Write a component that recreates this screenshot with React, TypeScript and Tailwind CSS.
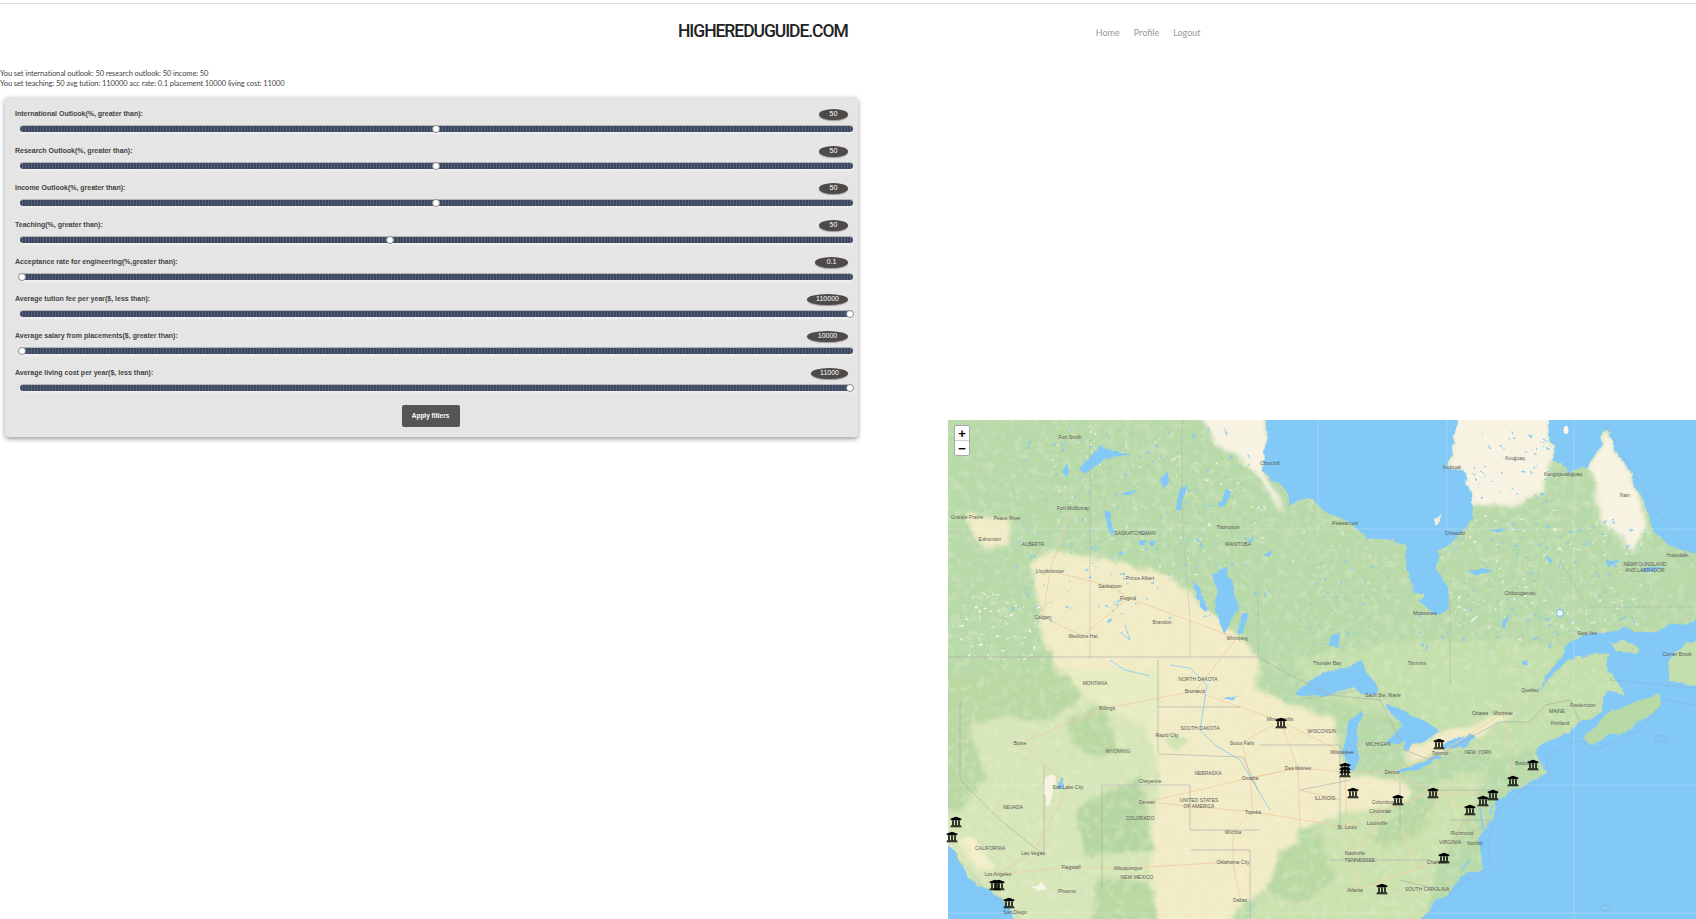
import { FaUniversity } from 'react-icons/fa';

const filters = [
	{ label: 'International Outlook(%, greater than):', value: '50', pct: 50, pill: 'w-[29px]' },
	{ label: 'Research Outlook(%, greater than):', value: '50', pct: 50, pill: 'w-[29px]' },
	{ label: 'Income Outlook(%, greater than):', value: '50', pct: 50, pill: 'w-[29px]' },
	{ label: 'Teaching(%, greater than):', value: '50', pct: 44.5, pill: 'w-[29px]' },
	{ label: 'Acceptance rate for engineering(%,greater than):', value: '0.1', pct: 0, pill: 'w-[33px]' },
	{ label: 'Average tution fee per year($, less than):', value: '110000', pct: 100, pill: 'w-[41px]' },
	{ label: 'Average salary from placements($, greater than):', value: '10000', pct: 0, pill: 'w-[41px]' },
	{ label: 'Average living cost per year($, less than):', value: '11000', pct: 100, pill: 'w-[37px]' },
];

const pins = [
	[1281, 723], [1439, 744], [1345, 768], [1345, 772], [1353, 793], [1398, 800], [1433, 793],
	[1513, 781], [1533, 765], [1493, 795], [1483, 801], [1470, 810], [1444, 858], [1382, 889],
	[956, 822], [952, 837], [995, 885], [999, 885], [1009, 903],
];

const labels: [number, number, string][] = [
	[1073, 508, 'Fort McMurray'], [967, 517, 'Grande Prairie'], [1007, 518, 'Peace River'], [990, 539, 'Edmonton'],
	[1033, 544, 'ALBERTA'], [1135, 533, 'SASKATCHEWAN'], [1238, 544, 'MANITOBA'], [1228, 527, 'Thompson'],
	[1050, 571, 'Lloydminster'], [1110, 586, 'Saskatoon'], [1140, 578, 'Prince Albert'], [1128, 598, 'Regina'],
	[1237, 638, 'Winnipeg'], [1083, 636, 'Medicine Hat'], [1043, 617, 'Calgary'], [1095, 683, 'MONTANA'],
	[1107, 708, 'Billings'], [1198, 679, 'NORTH DAKOTA'], [1195, 691, 'Bismarck'], [1200, 728, 'SOUTH DAKOTA'],
	[1167, 735, 'Rapid City'], [1242, 743, 'Sioux Falls'], [1280, 719, 'Minneapolis'], [1118, 751, 'WYOMING'],
	[1208, 773, 'NEBRASKA'], [1250, 778, 'Omaha'], [1147, 802, 'Denver'], [1140, 818, 'COLORADO'],
	[1068, 787, 'Salt Lake City'], [1150, 781, 'Cheyenne'], [1199, 800, 'UNITED STATES'], [1199, 806, 'OF AMERICA'],
	[1253, 812, 'Topeka'], [1233, 832, 'Wichita'], [1233, 862, 'Oklahoma City'], [1137, 877, 'NEW MEXICO'],
	[1128, 868, 'Albuquerque'], [1033, 853, 'Las Vegas'], [1067, 891, 'Phoenix'], [1071, 867, 'Flagstaff'],
	[998, 874, 'Los Angeles'], [1015, 912, 'San Diego'], [990, 848, 'CALIFORNIA'], [1013, 807, 'NEVADA'],
	[1240, 900, 'Dallas'], [1020, 743, 'Boise'], [1342, 752, 'Milwaukee'], [1440, 753, 'Toronto'],
	[1392, 772, 'Detroit'], [1325, 798, 'ILLINOIS'], [1378, 744, 'MICHIGAN'], [1322, 731, 'WISCONSIN'],
	[1480, 713, 'Ottawa'], [1503, 713, 'Montreal'], [1523, 763, 'Boston'], [1478, 752, 'NEW YORK'],
	[1475, 843, 'Norfolk'], [1462, 833, 'Richmond'], [1450, 842, 'VIRGINIA'], [1437, 862, 'Charlotte'],
	[1355, 890, 'Atlanta'], [1355, 853, 'Nashville'], [1360, 860, 'TENNESSEE'], [1427, 889, 'SOUTH CAROLINA'],
	[1383, 802, 'Columbus'], [1380, 811, 'Cincinnati'], [1377, 823, 'Louisville'], [1347, 827, 'St. Louis'],
	[1298, 768, 'Des Moines'], [1383, 695, 'Sault Ste. Marie'], [1560, 723, 'Portland'], [1583, 705, 'Fredericton'],
	[1557, 711, 'MAINE'], [1530, 690, 'Quebec'], [1327, 663, 'Thunder Bay'], [1417, 663, 'Timmins'],
	[1425, 613, 'Moosonee'], [1645, 564, 'NEWFOUNDLAND'], [1645, 570, 'AND LABRADOR'], [1587, 633, 'Sept-Iles'],
	[1677, 654, 'Corner Brook'], [1270, 463, 'Churchill'], [1515, 458, 'Kuujjuaq'], [1563, 474, 'Kangiqsualujjuaq'],
	[1452, 467, 'Inukjuak'], [1455, 533, 'Chisasibi'], [1345, 523, 'Peawanuck'], [1520, 593, 'Chibougamau'],
	[1625, 495, 'Nain'], [1677, 555, 'Hopedale'], [1162, 622, 'Brandon'], [1070, 437, 'Fort Smith'],
];

const land =
	'930,400 1268,400 1268,420 1263,453 1265,473 1288,493 1290,505 1300,500 1313,500 1343,520 1370,537 1405,543 1407,560 1407,580 1415,597 1435,617 1445,610 1448,590 1440,570 1437,552 1463,533 1473,517 1470,493 1463,473 1448,467 1457,420 1457,400 1550,400 1550,420 1553,460 1570,473 1587,467 1607,428 1622,460 1637,487 1647,510 1653,533 1680,550 1720,560 1720,610 1660,630 1583,633 1567,650 1533,693 1567,660 1610,653 1607,670 1625,695 1603,695 1603,712 1580,723 1540,747 1537,757 1548,773 1523,785 1507,790 1497,803 1493,818 1483,830 1478,840 1485,867 1460,878 1440,897 1420,919 1400,945 1030,945 1015,919 1003,900 990,890 973,880 948,847 925,825';

const lakes = [
	'1080,467 1100,448 1133,455 1107,457 1087,470',
	'1173,513 1180,487 1188,485 1180,510',
	'1213,573 1227,567 1240,607 1227,635 1219,623',
	'1240,613 1246,613 1245,632 1240,631',
	'1193,583 1210,607 1207,611 1192,592',
	'1065,465 1070,470 1068,477 1062,472',
	'1160,480 1172,470 1168,485 1162,488',
	'1125,495 1135,490 1128,498 1122,498',
	'1103,510 1110,515 1117,530 1115,537 1108,524',
	'1150,540 1158,540 1152,548',
	'1218,505 1226,490 1230,494 1224,506',
	'1262,555 1272,550 1268,558',
	'1248,540 1256,535 1252,543',
	'1118,552 1124,548 1123,555',
	'1140,540 1147,538 1146,545 1141,546',
	'1293,693 1312,680 1340,667 1362,660 1370,672 1378,690 1372,697 1350,690 1330,695 1305,697',
	'1343,747 1350,720 1363,708 1358,735 1360,757 1353,773 1347,770',
	'1387,705 1407,710 1427,723 1437,732 1413,747 1405,753 1403,743 1387,743 1397,733 1403,727 1387,710',
	'1397,772 1420,770 1443,757 1440,755 1417,765 1400,768',
	'1443,745 1470,733 1476,738 1468,745 1447,748',
	'1333,640 1340,632 1338,650 1332,648',
	'1500,627 1513,613 1505,630',
	'1521,660 1526,660 1527,666 1521,666',
	'1465,570 1480,567 1495,570 1480,574',
	'1544,556 1552,560 1547,566',
	'1606,560 1622,562 1610,566',
	'1640,572 1662,566 1650,574',
	'1490,530 1508,528 1500,534',
	'1058,782 1064,778 1066,790 1060,788',
	'1225,700 1240,695 1232,700',
];

const roads = [
	'M1043 617L1083 636L1128 598L1237 638',
	'M1050 571L1110 586L1128 598',
	'M1043 617L1050 571L1073 508',
	'M1107 708L1195 691L1237 638',
	'M1195 691L1280 721L1342 752',
	'M1147 802L1250 778L1298 768L1345 772',
	'M1147 802L1253 812L1347 827L1380 811L1433 793L1493 795',
	'M1233 832L1233 862L1240 900',
	'M1253 812L1233 832',
	'M1280 721L1298 768L1300 830',
	'M1345 772L1347 827L1355 853L1355 890',
	'M1345 772L1392 772L1440 753L1503 713',
	'M1392 772L1433 793L1470 810L1462 833L1437 862L1355 890',
	'M1503 713L1530 690',
	'M1503 713L1513 781L1533 765',
	'M1068 787L1020 743L1107 708',
	'M1068 787L1033 853L998 874',
	'M998 874L1071 867L1128 868L1233 862',
	'M1242 743L1250 778L1253 812',
	'M1242 743L1280 721',
	'M1380 811L1377 823L1355 853',
	'M1483 801L1470 810L1475 843',
	'M1298 768L1250 778',
	'M1340 800L1300 790',
	'M1400 830L1420 870',
];

// scattered ponds and clearings of the boreal belt
function rng(seed: number) {
	return () => {
		seed = (seed + 0x6d2b79f5) | 0;
		let t = Math.imul(seed ^ (seed >>> 15), 1 | seed);
		t = (t + Math.imul(t ^ (t >>> 7), 61 | t)) ^ t;
		return ((t ^ (t >>> 14)) >>> 0) / 4294967296;
	};
}

function speckle(seed: number, n: number, x: number, y: number, w: number, h: number, fill: string) {
	const r = rng(seed);
	return Array.from({ length: n }, (_, i) => (
		<rect
			key={i}
			x={x + r() * w}
			y={y + r() * h}
			width={0.8 + r() * 2}
			height={0.8 + r() * 1.4}
			fill={fill}
		/>
	));
}

function MapArt() {
	return (
		<svg viewBox="948 420 748 499" className="block h-[499px] w-[748px]">
			<defs>
				<filter id="rough" filterUnits="userSpaceOnUse" x="900" y="380" width="850" height="600">
					<feTurbulence type="fractalNoise" baseFrequency="0.05" numOctaves="4" seed="7" />
					<feDisplacementMap in="SourceGraphic" scale="11" xChannelSelector="R" yChannelSelector="G" />
				</filter>
				<filter id="soft" filterUnits="userSpaceOnUse" x="900" y="380" width="850" height="600">
					<feGaussianBlur stdDeviation="2" />
				</filter>
				<filter id="mottle" filterUnits="userSpaceOnUse" x="900" y="380" width="850" height="600">
					<feTurbulence type="fractalNoise" baseFrequency="0.13" numOctaves="4" seed="3" />
					<feColorMatrix type="matrix" values="0 0 0 0 0.9  0 0 0 0 0.93  0 0 0 0 0.74  3 0 0 0 -1.35" />
				</filter>
				<clipPath id="landClip">
					<polygon points={land} />
				</clipPath>
			</defs>
			<rect x="948" y="420" width="748" height="499" fill="#83c9f7" />
			<g filter="url(#rough)">
				<polygon fill="#b8d9a8" points={land} />
				<polygon fill="#b8d9a8" points="1657,693 1663,703 1633,727 1593,745 1583,737 1613,710" />
				<polygon fill="#c4dfae" points="1610,640 1625,641 1640,653 1635,656 1617,648" />
				<polygon fill="#c4dfae" points="1720,628 1720,685 1668,682 1672,660 1690,640" />
				<polygon fill="#c4dfae" points="1415,592 1425,594 1423,600 1412,597" />
				<g clipPath="url(#landClip)">
					<g filter="url(#soft)">
						{/* warmer south of the belt */}
						<polygon fill="#c3dfac" points="1290,660 1400,640 1510,640 1567,650 1533,693 1567,660 1610,653 1625,695 1580,723 1540,747 1500,760 1400,720 1330,700" />
						<polygon fill="#d6e6b8" points="925,700 1040,680 1060,670 1160,670 1160,945 1015,945 1003,900 990,890 973,880 925,847" />
						<polygon fill="#e7ecc2" points="1060,670 1160,660 1160,760 1140,720 1090,700" />
						<polygon fill="#cbe1ae" points="1290,860 1340,800 1400,810 1440,780 1490,770 1470,810 1440,860 1420,945 1240,945 1270,880" />
						{/* tundra */}
						<polygon fill="#f8f3e2" points="1457,400 1550,400 1553,460 1543,490 1513,507 1470,507 1467,490 1448,467" />
						<polygon fill="#f8f3e2" points="1607,428 1622,460 1637,487 1647,527 1633,550 1600,520 1593,477 1587,467" />
						<polygon fill="#f8f3e2" points="1193,400 1268,400 1265,473 1288,513 1273,500 1260,477 1233,453 1213,443" />
						{/* prairies and plains */}
						<polygon
							fill="#f2ecc6"
							points="1030,563 1050,550 1090,557 1167,573 1193,597 1243,637 1257,657 1258,690 1335,720 1345,775 1405,780 1415,790 1407,800 1340,815 1300,830 1290,880 1240,905 1215,945 1160,945 1150,850 1160,780 1155,740 1160,700 1100,668 1055,668 1043,643 1037,597"
						/>
						<polygon fill="#f2ecc6" points="1405,752 1437,733 1470,728 1500,712 1510,716 1475,738 1445,750 1410,765" />
						<polygon fill="#e7ecc2" points="1100,668 1160,668 1165,700 1150,730 1100,700" />
						{/* mountain greens */}
						<polygon fill="#b9d8a2" points="925,675 1055,670 1085,695 1050,720 1000,717 968,725 925,720" />
						<polygon fill="#b9d8a2" points="1065,720 1100,705 1120,750 1090,760 1070,745" />
						<polygon fill="#b5d6a2" points="1075,810 1140,775 1153,850 1085,855" />
						<polygon fill="#b9d8a2" points="1280,850 1320,835 1335,880 1300,905 1265,890" />
						<polygon fill="#b9d8a2" points="1370,835 1415,800 1435,790 1430,825 1385,850" />
						<polygon fill="#b9d8a2" points="1100,875 1150,885 1160,945 1085,945" />
						<polygon fill="#b9d8a2" points="925,700 963,700 985,780 960,815 925,810" />
						<polygon fill="#f4eecb" points="958,840 970,835 995,870 985,875" />
						<polygon fill="#f2ecc6" points="968,510 990,520 1010,515 1010,545 985,550 970,530" />
						<polygon fill="#cfe3b0" points="1190,740 1175,732 1165,740 1175,752" />
					</g>
					<rect x="900" y="380" width="850" height="600" filter="url(#mottle)" opacity="0.25" />
					<polygon fill="#f8f3e2" points="1045,780 1055,778 1050,805 1045,802" />
					<polygon fill="#f8f3e2" points="1030,885 1040,882 1045,890 1035,892" />

					{speckle(11, 240, 1010, 430, 260, 190, '#83c9f7')}
					{speckle(12, 130, 1050, 430, 260, 150, '#e9f1d9')}
					{speckle(13, 170, 1440, 520, 210, 130, '#83c9f7')}
					{speckle(14, 190, 1440, 510, 210, 130, '#eaf1da')}
					{speckle(15, 70, 960, 590, 80, 70, '#f5f6ea')}
					{speckle(16, 50, 1300, 560, 130, 90, '#83c9f7')}
					{speckle(17, 70, 1300, 520, 130, 130, '#d6e8c4')}
					{speckle(18, 50, 1470, 430, 80, 70, '#83c9f7')}
				</g>
				{lakes.map((p) => (
					<polygon key={p} points={p} fill="#83c9f7" />
				))}
				<polygon fill="#f1eed6" points="1433,518 1442,515 1437,525" />
			</g>
			<circle cx="1560" cy="613" r="3.5" fill="#fbf7e8" stroke="#83c9f7" strokeWidth="1.5" />
			<ellipse cx="1566" cy="430" rx="2.5" ry="4" fill="#fbf7e8" />

			{roads.map((d) => (
				<path key={d} d={d} fill="none" stroke="#f0cb9f" strokeWidth="0.8" />
			))}
			<path d="M1480 808L1483 830M1492 805L1490 815M1462 870L1470 860" fill="none" stroke="#83c9f7" strokeWidth="1.5" />
			<path d="M1170 665L1190 668L1207 685L1200 730L1215 745L1240 760L1270 810" fill="none" stroke="#83c9f7" strokeWidth="0.8" />
			<path d="M1110 660L1125 670L1150 676M1125 625L1130 640L1120 632" fill="none" stroke="#83c9f7" strokeWidth="0.8" />

			{/* borders */}
			<g fill="none" stroke="#a9a9a9" strokeWidth="0.6">
				<path d="M948 657H1258L1290 675L1330 695L1380 700L1405 750L1430 760L1475 735L1500 722H1530L1545 705L1570 700L1580 722" />
				<path d="M1090 440V660M1182 420V520L1190 620V657M1258 590V657" strokeDasharray="1.5 1" />
				<path d="M1158 660V753M1158 707H1240M1158 754L1243 757L1258 790M1102 785V890M1044 765V855M1102 785H1190V830H1260M1190 850H1250V919M1044 855L1000 820L960 780V700M1260 745H1340V790M1300 790L1350 780M1340 790V830M1400 780L1400 830M1440 790L1500 790M1450 820H1490M1330 860H1430M1400 880L1440 890" />
				<path d="M1450 600V685M1593 607H1696M1593 607L1583 600L1560 560" strokeDasharray="1.5 1" />
			</g>
			{/* maritime limits */}
			<g fill="none" stroke="#8aa6bb" strokeWidth="0.6" strokeDasharray="1.5 1">
				<path d="M1605 425L1650 500L1680 545L1696 565" />
				<path d="M1696 705L1665 700L1640 730L1595 750L1580 740L1545 755L1550 778L1525 788L1500 808L1488 840L1490 868L1463 882L1425 919" />
				<path d="M948 850L978 880L985 895L1000 900L1020 919" />
				<path d="M1300 700L1360 690L1380 695" />
				<path d="M1640 640L1610 680L1696 688" />
			</g>
			<ellipse cx="1661" cy="739" rx="6" ry="3.5" fill="none" stroke="#8aa6bb" strokeWidth="0.5" />
			<ellipse cx="1605" cy="908" rx="5" ry="3" fill="none" stroke="#8aa6bb" strokeWidth="0.5" />
			{/* graticule */}
			<path d="M1318 420V520M1447 420V530M1574 420V919M948 529H1696M948 785H1696M948 913H1696" stroke="#ffffff" strokeOpacity="0.2" strokeWidth="1" fill="none" />

			{labels.map(([x, y, t]) => (
				<text
					key={t}
					x={x}
					y={y + 2}
					textAnchor="middle"
					className="fill-[#5a5a5a] font-['Liberation_Sans',sans-serif] text-[5px]"
				>
					{t}
				</text>
			))}
		</svg>
	);
}

function FilterRow({ label, value, pct, pill }: (typeof filters)[number]) {
	return (
		<div className="mb-3">
			<div className="flex h-[14px] items-center justify-between">
				<span className="text-[7px] font-bold text-[#444444]">{label}</span>
				<span
					className={`${pill} flex h-[11px] items-center justify-center rounded-[50%] bg-[#4f4a4a] text-[7px] text-white shadow-[0_1px_1px_#999999]`}
				>
					{value}
				</span>
			</div>
			<div className="relative mt-[5px] -mr-[5px] ml-[5px] h-[6px] rounded-[3px] bg-[repeating-linear-gradient(90deg,#3c4760_0,#3c4760_2px,#566079_2px,#566079_3px)] shadow-[0_-1px_0_#b5b5b5,0_2px_2px_#efefef]">
				<span
					className="absolute -top-px h-2 w-2 rounded-full border border-[#8d8d8d] bg-white"
					style={{ left: `calc(${pct} * (100% - 5px) / 100 - 2px)` }}
				/>
			</div>
		</div>
	);
}

export default function App() {
	return (
		<div className="h-screen overflow-hidden bg-white pt-[3px] font-['Liberation_Sans',sans-serif]">
			<header className="flex h-[66px] items-start border-t border-[#dddddd]">
				<h1 className="mt-[16px] ml-[678px] font-['Roboto',sans-serif] text-[17.5px] leading-[22px] font-medium tracking-[-1.05px] text-[#222222]">
					HIGHEREDUGUIDE.COM
				</h1>
				<nav className="mt-[23px] ml-[248px] flex gap-[14px] font-['Lato',sans-serif] text-[9px] leading-3 text-[#999999]">
					<span>Home</span>
					<span>Profile</span>
					<span>Logout</span>
				</nav>
			</header>
			<div className="flex items-start">
				<div className="w-[948px] shrink-0">
					<p className="font-['Lato',sans-serif] text-[7.5px] leading-[10px] tracking-[-0.1px] text-[#444444]">
						You set international outlook: 50 research outlook: 50 income: 50
					</p>
					<p className="font-['Lato',sans-serif] text-[7.5px] leading-[10px] tracking-[-0.1px] text-[#444444]">
						You set teaching: 50 avg tution: 110000 acc rate: 0.1 placement 10000 living cost: 11000
					</p>
					<section className="mt-2 ml-[5px] w-[853px] rounded-[4px] bg-[#e5e5e5] pt-[10px] pr-[10px] pb-[10px] pl-[10px] shadow-[0_2px_5px_rgba(0,0,0,0.4)]">
						{filters.map((f) => (
							<FilterRow key={f.label} {...f} />
						))}
						<div className="flex justify-center pt-[2px]">
							<button className="h-[22px] w-[58px] -translate-x-[1px] rounded-[2px] bg-[#555555] text-[6.5px] font-bold text-white">
								Apply filters
							</button>
						</div>
					</section>
				</div>
				<div className="relative mt-[351px] w-[748px] shrink-0">
					<MapArt />
					<div className="absolute top-[5px] left-[6px] flex w-[16px] flex-col overflow-hidden rounded-[2px] border border-[#a8a8a8] bg-white text-[13px] leading-[15px] font-bold text-black">
						<span className="h-[15px] border-b border-[#cccccc] text-center">+</span>
						<span className="h-[14px] text-center">−</span>
					</div>
					{pins.map(([x, y]) => (
						<span
							key={`${x}-${y}`}
							className="absolute text-black"
							style={{ left: x - 948 - 6, top: y - 420 - 6 }}
						>
							<FaUniversity size={12} />
						</span>
					))}
				</div>
			</div>
		</div>
	);
}
